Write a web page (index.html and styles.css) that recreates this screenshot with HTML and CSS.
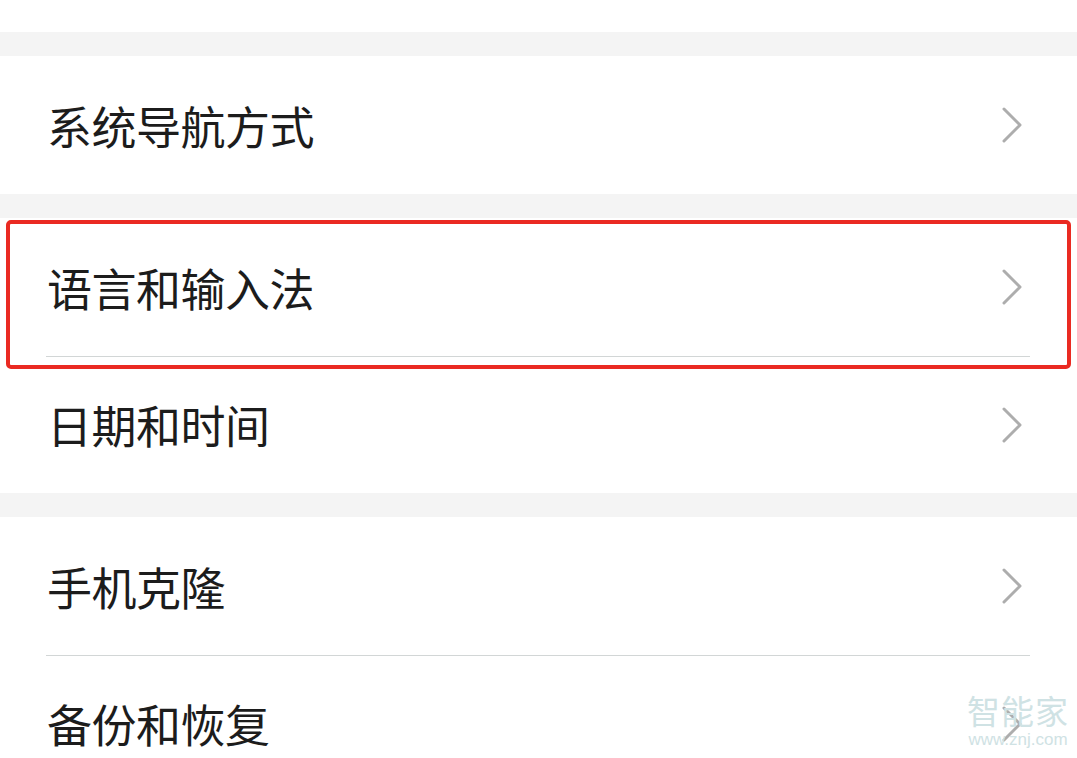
FILE: index.html
```html
<!DOCTYPE html>
<html lang="zh-CN">
<head>
  <meta charset="UTF-8">
  <meta name="viewport" content="width=device-width, initial-scale=1.0">
  <title>设置</title>
  <link rel="stylesheet" href="styles.css">
</head>
<body>
  <div class="top-space"></div>

  <div class="group">
    <div class="item">
      <span class="label">系统导航方式</span>
      <svg class="arrow" viewBox="0 0 22 38"><path d="M3 3 L19 19 L3 35"/></svg>
    </div>
  </div>

  <div class="group">
    <div class="item">
      <span class="label">语言和输入法</span>
      <svg class="arrow" viewBox="0 0 22 38"><path d="M3 3 L19 19 L3 35"/></svg>
    </div>
    <div class="item">
      <span class="label">日期和时间</span>
      <svg class="arrow" viewBox="0 0 22 38"><path d="M3 3 L19 19 L3 35"/></svg>
    </div>
    <!-- highlight marker around the language row -->
    <div class="highlight"></div>
  </div>

  <div class="group">
    <div class="item">
      <span class="label">手机克隆</span>
      <svg class="arrow" viewBox="0 0 22 38"><path d="M3 3 L19 19 L3 35"/></svg>
    </div>
    <div class="item">
      <span class="label">备份和恢复</span>
      <svg class="arrow" viewBox="0 0 22 38"><path d="M3 3 L19 19 L3 35"/></svg>
    </div>
  </div>

  <div class="watermark">
    <div class="wm-name">智能家</div>
    <div class="wm-url">www.znj.com</div>
  </div>
</body>
</html>
```

FILE: styles.css
```css
body {
  margin: 0;
  background: #f4f4f4;
  font-family: "Noto Sans CJK SC", "Noto Sans", sans-serif;
  color: #1c1c1c;
  height: 758px;
  overflow: hidden;
  position: relative;
}

.top-space {
  height: 32px;
  background: #fff;
}

.group {
  position: relative;
  background: #fff;
  margin-top: 24px;
}

.item {
  height: 138px;
  display: flex;
  align-items: center;
  justify-content: space-between;
  padding: 0 54px 0 47px;
  position: relative;
}

.item + .item {
  height: 137px;
}

.item + .item::before {
  content: "";
  position: absolute;
  top: 0;
  left: 46px;
  right: 47px;
  height: 1px;
  background: #d2d6d6;
}

.label {
  font-size: 45px;
  line-height: 1;
  letter-spacing: -0.5px;
}

.arrow {
  width: 22px;
  height: 38px;
  fill: none;
  stroke: #adadad;
  stroke-width: 3;
  stroke-linecap: round;
  stroke-linejoin: round;
}

.highlight {
  position: absolute;
  left: 6px;
  right: 6px;
  top: 2px;
  height: 149px;
  border: 4px solid #ea2a22;
  border-radius: 5px;
  box-sizing: border-box;
}

.watermark {
  position: absolute;
  left: 965px;
  top: 694px;
  width: 106px;
  color: #cfe2e4;
  text-align: center;
  line-height: 1;
}

.wm-name {
  font-size: 33px;
  letter-spacing: 1px;
}

.wm-url {
  font-family: "Liberation Sans", sans-serif;
  font-size: 17px;
  margin-top: 4px;
}
```
